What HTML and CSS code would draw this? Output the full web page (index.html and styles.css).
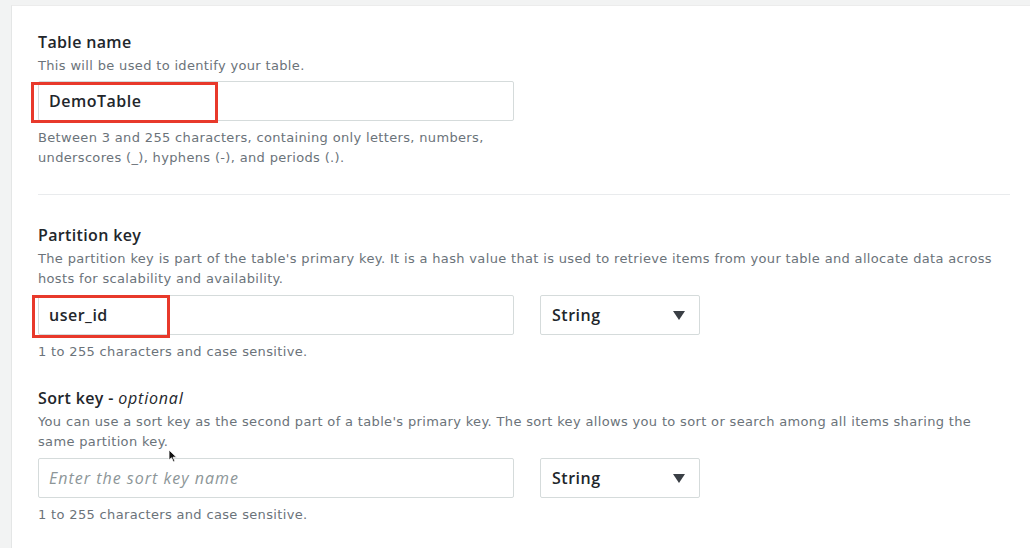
FILE: index.html
```html
<!DOCTYPE html>
<html lang="en">
<head>
<meta charset="utf-8">
<title>Create table</title>
<link rel="stylesheet" href="styles.css">
</head>
<body>
<div class="panel">
  <section class="field first">
    <div class="label">Table name</div>
    <div class="desc">This will be used to identify your table.</div>
    <div class="row">
      <div class="input-wrap">
        <div class="input">DemoTable</div>
        <div class="mark mark-name"></div>
      </div>
    </div>
    <div class="help">Between 3 and 255 characters, containing only letters, numbers,<br>underscores (_), hyphens (-), and periods (.).</div>
  </section>

  <hr class="divider">

  <section class="field">
    <div class="label">Partition key</div>
    <div class="desc">The partition key is part of the table's primary key. It is a hash value that is used to retrieve items from your table and allocate data across<br>hosts for scalability and availability.</div>
    <div class="row">
      <div class="input-wrap">
        <div class="input">user_id</div>
        <div class="mark mark-key"></div>
      </div>
      <div class="select">String<span class="caret"></span></div>
    </div>
    <div class="help">1 to 255 characters and case sensitive.</div>
  </section>

  <section class="field sort">
    <div class="label">Sort key - <em>optional</em></div>
    <div class="desc">You can use a sort key as the second part of a table's primary key. The sort key allows you to sort or search among all items sharing the<br>same partition key.</div>
    <div class="row">
      <div class="input-wrap">
        <div class="input placeholder">Enter the sort key name</div>
        <svg class="pointer" width="10" height="14" viewBox="0 0 10 14"><path d="M1 1 L1 11 L3.5 8.8 L5.5 13 L7 12.3 L5 8.2 L8.5 8.2 Z" fill="#111" stroke="#fff" stroke-width="0.8"/></svg>
      </div>
      <div class="select">String<span class="caret"></span></div>
    </div>
    <div class="help">1 to 255 characters and case sensitive.</div>
  </section>
</div>
</body>
</html>
```

FILE: styles.css
```css
html, body {
  margin: 0;
  padding: 0;
  background: #f2f3f3;
  height: 100%;
  overflow: hidden;
}
body {
  font-family: "Open Sans", "Noto Sans", Arial, sans-serif;
  color: #16191f;
}
.panel {
  margin: 5px 0 0 11px;
  background: #fff;
  border-left: 1px solid #e4e6e6;
  border-top: 1px solid #ececec;
  padding: 24px 20px 0 26px;
  height: 560px;
  box-sizing: border-box;
}
.field .label {
  font-size: 16px;
  font-weight: 600;
  letter-spacing: 0.35px;
  line-height: 24px;
  margin-bottom: 2px;
  color: #22262b;
}
.field .label em {
  font-weight: 500;
  font-style: italic;
  letter-spacing: 0.8px;
}
.desc,
.help {
  font-family: "DejaVu Sans", "Open Sans", sans-serif;
  font-size: 13px;
  letter-spacing: 0.34px;
  line-height: 20px;
  color: #6b737a;
}
.help {
  margin-top: 7px;
}
.row {
  display: flex;
  gap: 26px;
  margin-top: 5px;
}
.field:not(.first) .row { margin-top: 6px; }
.input-wrap {
  position: relative;
  width: 476px;
}
.input {
  box-sizing: border-box;
  height: 40px;
  border: 1px solid #d5dbdb;
  border-radius: 2px;
  padding: 0 10px;
  font-size: 16px;
  font-weight: 600;
  letter-spacing: 0.5px;
  line-height: 38px;
  color: #22262b;
}
.input.placeholder {
  font-weight: 400;
  font-style: italic;
  letter-spacing: 1px;
  color: #8d9698;
}
.select {
  box-sizing: border-box;
  width: 160px;
  height: 40px;
  border: 1px solid #d5dbdb;
  border-radius: 2px;
  padding: 0 14px 0 11px;
  font-size: 16px;
  font-weight: 600;
  letter-spacing: 0.5px;
  line-height: 38px;
  color: #22262b;
  display: flex;
  justify-content: space-between;
  align-items: center;
}
.caret {
  width: 0;
  height: 0;
  border-left: 6px solid transparent;
  border-right: 6px solid transparent;
  border-top: 9px solid #3a3f45;
}
.divider {
  border: 0;
  border-top: 1px solid #e9ebed;
  margin: 26px 0 28px 0;
}
.sort { margin-top: 24px; }
.mark {
  position: absolute;
  border: 3px solid #e8392b;
  box-sizing: border-box;
}
.mark-name {
  left: -7px;
  top: 1px;
  width: 187px;
  height: 41px;
}
.mark-key {
  left: -6px;
  top: 0;
  width: 138px;
  height: 43px;
}
.pointer {
  position: absolute;
  left: 130px;
  top: -9px;
}
```
